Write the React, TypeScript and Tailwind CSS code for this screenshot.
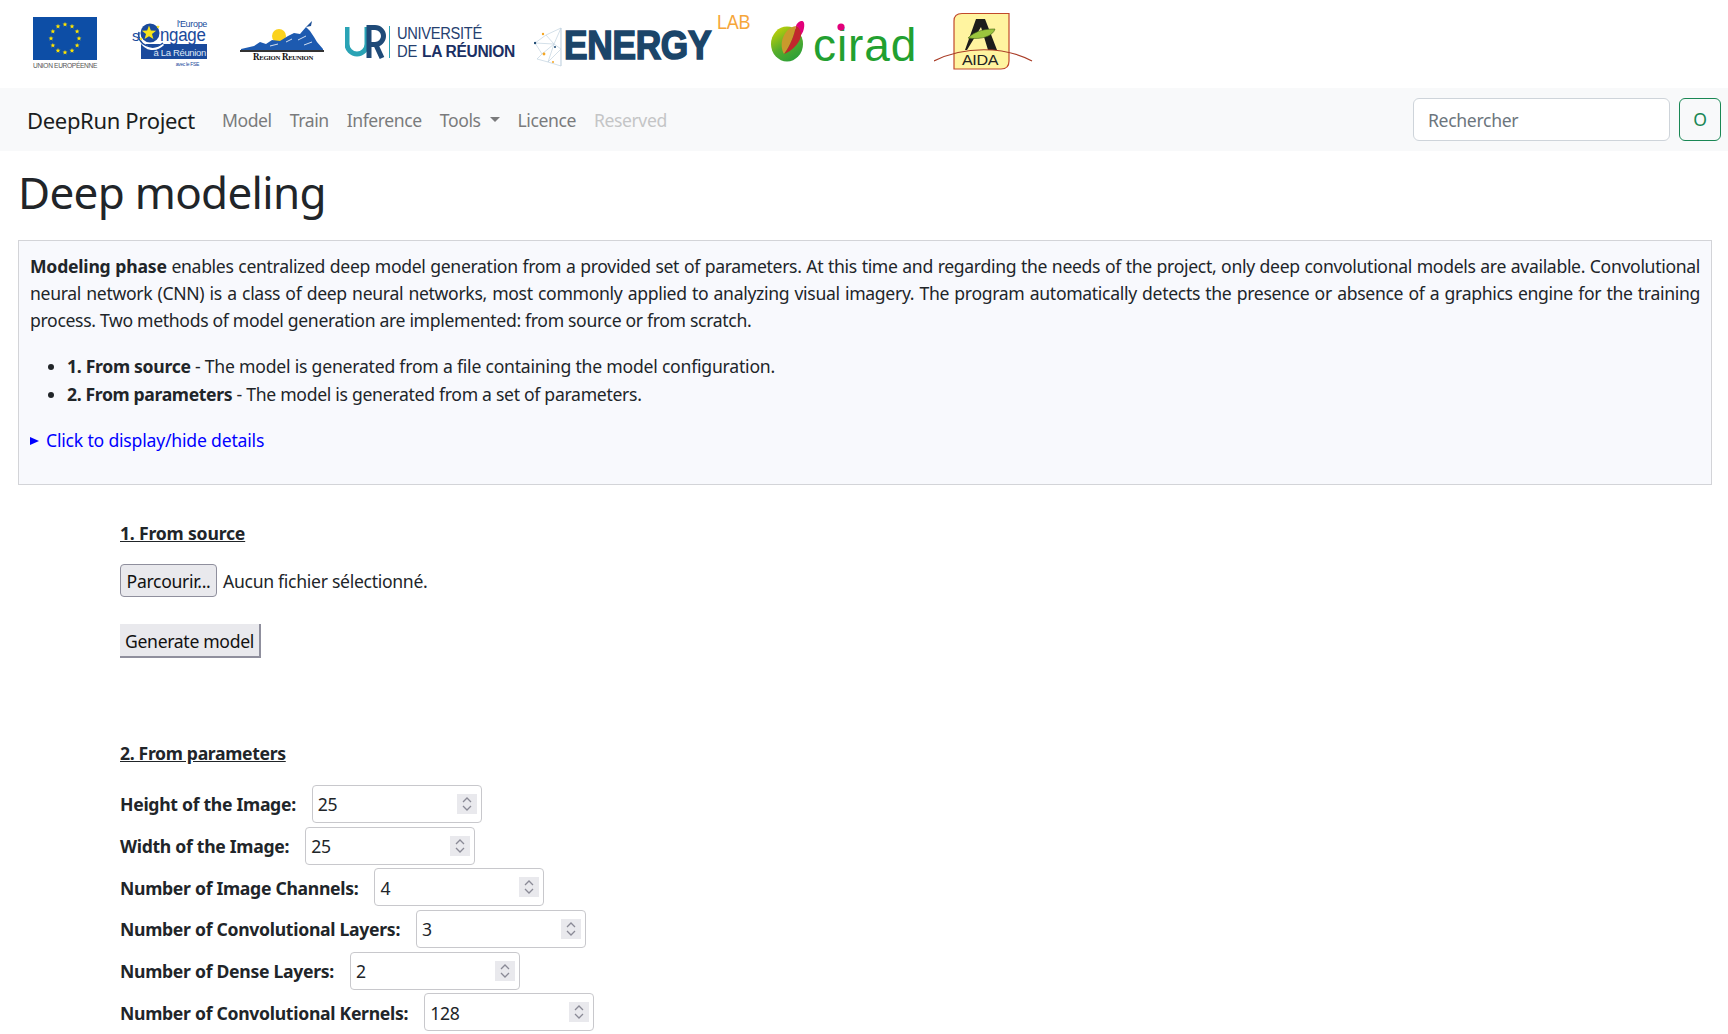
import React from 'react';

const sans = "font-['Noto_Sans',sans-serif]";

// EU stars placed on a circle
const starPoints = (cx: number, cy: number, r: number) => {
  const pts: string[] = [];
  for (let i = 0; i < 10; i++) {
    const a = (Math.PI / 5) * i - Math.PI / 2;
    const rad = i % 2 === 0 ? r : r * 0.42;
    pts.push(`${(cx + rad * Math.cos(a)).toFixed(2)},${(cy + rad * Math.sin(a)).toFixed(2)}`);
  }
  return pts.join(' ');
};

const EuLogo = () => (
  <svg width="66" height="88" viewBox="0 0 66 88">
    <rect x="1" y="17" width="64" height="43" fill="#0d4ea6" />
    {Array.from({ length: 12 }).map((_, i) => {
      const a = (Math.PI / 6) * i;
      return <polygon key={i} points={starPoints(33 + 14 * Math.cos(a), 38.5 + 14 * Math.sin(a), 2.6)} fill="#ffe500" />;
    })}
    <text x="1" y="68" fontSize="6.4" fill="#555" textLength="64" lengthAdjust="spacingAndGlyphs" fontFamily="Liberation Sans">UNION EUROPÉENNE</text>
  </svg>
);

const EuropeLogo = () => (
  <svg width="76" height="88" viewBox="0 0 76 88">
    <rect x="9" y="44" width="66" height="15" fill="#1a4a9c" />
    <path d="M9 41 C14 50 24 51 31 44" fill="none" stroke="#fff" strokeWidth="3" />
    <path d="M7 32 C4 44 20 52 31 43" fill="none" stroke="#1a4a9c" strokeWidth="1.6" />
    <text x="75" y="27" fontSize="9" fill="#1a4a9c" textAnchor="end" fontFamily="Liberation Sans">l'Europe</text>
    <text x="0" y="41" fontSize="15" fill="#1a4a9c" fontFamily="Liberation Sans">s</text>
    <text transform="translate(28 41) scale(0.89 1)" fontSize="19" fill="#1a4a9c" fontFamily="Liberation Sans">ngage</text>
    <circle cx="18" cy="33" r="9.5" fill="#1a4a9c" />
    <polygon points={starPoints(17, 33, 7.5)} fill="#f6e319" />
    <polygon points={starPoints(9, 39, 2)} fill="#f6e319" />
    <polygon points={starPoints(26, 27, 2)} fill="#f6e319" />
    <text x="74" y="56" fontSize="9.5" fill="#dfe7f6" textAnchor="end" fontFamily="Liberation Sans">à La Réunion</text>
    <text x="67" y="66" fontSize="5" fill="#1a4a9c" textAnchor="end" fontFamily="Liberation Sans">avec le FSE</text>
  </svg>
);

const RegionLogo = () => (
  <svg width="84" height="88" viewBox="0 0 84 88">
    <circle cx="39" cy="36" r="7" fill="#fbd21e" />
    <path d="M1 49 L14 46 L20 42 L26 44 L32 40 L40 41 L48 36 L54 33 L60 34 L66 27 L70 31 L74 37 L77 42 L83 49 L83 50 L1 50 Z" fill="#1d5ab0" />
    <path d="M66 27 L70 23 L72 21 L71 26 Z" fill="#1d4f96" />
    <path d="M30 46 L38 44 M46 42 L52 39 M58 40 L66 36 M64 45 L72 42" stroke="#fff" strokeWidth="0.8" />
    <rect x="0" y="50" width="84" height="2" fill="#333" />
    <text x="13" y="60" fontSize="9.5" fontWeight="700" fill="#111" textLength="60" lengthAdjust="spacingAndGlyphs" fontVariant="small-caps" fontFamily="Liberation Serif">Region Reunion</text>
  </svg>
);

const UrLogo = () => (
  <svg width="172" height="88" viewBox="0 0 172 88">
    <path d="M2 27 V44 a10 10 0 0 0 20 0 V27" fill="none" stroke="#2aa3b5" strokeWidth="5" />
    <path d="M24 58 V27.5 h6 a8 8 0 0 1 0 17 h-5 M31 45 L37 58" fill="none" stroke="#1f4a78" strokeWidth="5" />
    <rect x="44" y="26" width="1" height="32" fill="#2aa3b5" />
    <text x="52" y="38.5" fontSize="16" fill="#25406f" textLength="85" lengthAdjust="spacingAndGlyphs" fontFamily="Liberation Sans">UNIVERSITÉ</text>
    <text x="52" y="57" fontSize="16" fill="#25406f" textLength="20" lengthAdjust="spacingAndGlyphs" fontFamily="Liberation Sans">DE</text>
    <text x="77" y="57" fontSize="16" fontWeight="700" fill="#1b2f63" textLength="93" lengthAdjust="spacingAndGlyphs" fontFamily="Liberation Sans">LA RÉUNION</text>
  </svg>
);

const EnergyLogo = () => (
  <svg width="218" height="88" viewBox="0 0 218 88">
    <g stroke="#c2d2df" strokeWidth="0.7" fill="none">
      <path d="M27 28 L12 35 L1 43 L8 54 L3 59 L14 62 L27 66 Z" />
      <path d="M12 35 L20 44 L8 54 M20 44 L27 28 M20 44 L27 49 M20 44 L14 62 M27 49 L14 62 M1 43 L20 44" />
      <path d="M27 28 V66" />
    </g>
    <circle cx="1" cy="43" r="1.2" fill="#1d4a73" />
    <circle cx="9" cy="34" r="1.2" fill="#f5a623" />
    <circle cx="10" cy="54" r="1.4" fill="#f5a623" />
    <circle cx="21" cy="47" r="1" fill="#1d4a73" />
    <circle cx="19" cy="62" r="1" fill="#f5a623" />
    <text transform="translate(30 59) scale(0.882 1)" fontSize="40" fontWeight="700" fill="#1b4569" stroke="#1b4569" strokeWidth="1.6" fontFamily="Liberation Sans">ENERGY</text>
    <text transform="translate(183 29) scale(0.9 1)" fontSize="20" fill="#f6a63a" fontFamily="Liberation Sans">LAB</text>
  </svg>
);

const CiradLogo = () => (
  <svg width="150" height="88" viewBox="0 0 150 88">
    <defs>
      <linearGradient id="ciradGreen" x1="0" y1="0" x2="0.6" y2="1">
        <stop offset="0" stopColor="#d8d800" />
        <stop offset="0.6" stopColor="#56ad2c" />
        <stop offset="1" stopColor="#2fa037" />
      </linearGradient>
    </defs>
    <ellipse cx="17" cy="44" rx="16" ry="17.5" fill="url(#ciradGreen)" />
    <path d="M14 54 C8 44 14 28 26 26 C24 36 20 46 14 54 Z" fill="#c99a2c" />
    <path d="M14 54 C24 50 33 40 31 30 C30 28 28 26 26 26 C24 36 20 46 14 54 Z" fill="#c1272d" />
    <path d="M26 26 C27 22 33 19 34 23 C35 27 33 33 31 35 C31 31 29 27 26 26 Z" fill="#e2007a" />
    <text x="43" y="61" fontSize="46" fill="#22a030" textLength="103" fontFamily="Liberation Sans">cirad</text>
    <circle cx="71" cy="27" r="3.6" fill="#e2007a" />
  </svg>
);

const AidaLogo = () => (
  <svg width="100" height="88" viewBox="0 0 100 88">
    <path d="M28 13.5 H75 V61 Q75 69 67 69 H20 V21 Q20 13.5 28 13.5 Z" fill="#fff4a0" stroke="#c0492b" strokeWidth="1.2" />
    <path d="M31 50 L42 19 H51 L63 50 H54 L47 27 L33 50 Z" fill="#1d1d1b" />
    <path d="M34 38 C42 30 52 29 61 29 C59 36 48 40 34 38 Z" fill="#9bc53d" stroke="#3f5e16" strokeWidth="0.6" />
    <path d="M0 61 C30 46 70 46 98 61" fill="none" stroke="#a93c26" strokeWidth="1.2" />
    <text x="28" y="65" fontSize="14" fill="#222" textLength="36" lengthAdjust="spacingAndGlyphs" fontFamily="Liberation Sans">AIDA</text>
  </svg>
);

const Spinner = () => (
  <span className="flex h-[20px] w-[20px] flex-col items-center justify-center bg-[#e9e9ed]">
    <svg width="10" height="16" viewBox="0 0 10 16" fill="none" stroke="#8a8a96" strokeWidth="1.3">
      <path d="M1 6 L5 2 L9 6" />
      <path d="M1 10 L5 14 L9 10" />
    </svg>
  </span>
);

const params = [
  { label: 'Height of the Image:', value: '25' },
  { label: 'Width of the Image:', value: '25' },
  { label: 'Number of Image Channels:', value: '4' },
  { label: 'Number of Convolutional Layers:', value: '3' },
  { label: 'Number of Dense Layers:', value: '2' },
  { label: 'Number of Convolutional Kernels:', value: '128' },
];

const navLinks = ['Model', 'Train', 'Inference'];

const App: React.FC = () => {
  return (
    <div className={`${sans} h-[1034px] overflow-hidden bg-white text-[17.6px] tracking-[-0.33px] text-[#212529]`}>
      <header className="flex h-[88px] bg-white pl-[32px]">
        <EuLogo />
        <div className="ml-[34px]"><EuropeLogo /></div>
        <div className="ml-[32px]"><RegionLogo /></div>
        <div className="ml-[21px]"><UrLogo /></div>
        <div className="ml-[17px]"><EnergyLogo /></div>
        <div className="ml-[18px]"><CiradLogo /></div>
        <div className="ml-[14px]"><AidaLogo /></div>
      </header>

      <nav className="flex h-[63px] items-center bg-[#f8f9fa] pl-[27px] pr-[7px]">
        <a className="pt-[1px] text-[22px] text-[#1a1d20]">DeepRun Project</a>
        <ul className="ml-[27px] flex items-center gap-[18px] pt-[1px] tracking-[-0.42px] text-[#7a7b7c]">
          {navLinks.map((l) => (
            <li key={l}>{l}</li>
          ))}
          <li className="flex items-center">
            Tools
            <span className="ml-[9px] h-0 w-0 border-x-[5px] border-t-[5px] border-x-transparent border-t-[#7a7b7c]" />
          </li>
          <li>Licence</li>
          <li className="text-[#c4c5c6]">Reserved</li>
        </ul>
        <div className="ml-auto flex items-center gap-[9px]">
          <input
            readOnly
            placeholder="Rechercher"
            className="h-[43px] w-[257px] rounded-[6px] border border-[#ced4da] bg-white px-[14px] outline-none placeholder:text-[#6c757d]"
          />
          <button className="h-[43px] w-[42px] rounded-[6px] border border-[#198754] text-[#198754]">O</button>
        </div>
      </nav>

      <main className="pl-[18px] pr-[16px]">
        <h1 className="pt-[15px] text-[44px] font-normal leading-[53px] tracking-[-0.7px] text-[#212529]">Deep modeling</h1>

        <section className="mt-[21px] h-[245px] border border-[#d3d4d8] bg-[#f8f9fd] px-[11px] pt-[12px] leading-[27px]">
          <p className="text-justify">
            <strong className="font-bold tracking-[-0.22px]">Modeling phase</strong> enables centralized deep model generation from a provided set of parameters. At this time and regarding the needs of the project, only deep convolutional models are available. Convolutional neural network (CNN) is a class of deep neural networks, most commonly applied to analyzing visual imagery. The program automatically detects the presence or absence of a graphics engine for the training process. Two methods of model generation are implemented: from source or from scratch.
          </p>
          <ul className="mt-[19px] list-disc pl-[37px] leading-[27.5px] tracking-[-0.22px]">
            <li><strong className="font-bold tracking-[-0.3px]">1. From source</strong> - The model is generated from a file containing the model configuration.</li>
            <li><strong className="font-bold tracking-[-0.36px]">2. From parameters</strong> <span className="tracking-[-0.3px]">- The model is generated from a set of parameters.</span></li>
          </ul>
          <div className="mt-[19px] flex items-center tracking-[-0.2px] text-[#0000ff]">
            <span className="mr-[7px] h-0 w-0 border-y-[4.5px] border-l-[9px] border-y-transparent border-l-[#0000ff]" />
            Click to display/hide details
          </div>
        </section>

        <div className="pl-[102px]">
          <h2 className="mt-[35px] font-bold leading-[26px] tracking-[-0.19px] underline">1. From source</h2>
          <div className="mt-[18px] flex items-center">
            <button className="h-[33px] w-[97px] rounded-[4px] border border-[#8f8f9d] bg-[#e9e9ed] pt-[1px] text-[#111]">Parcourir...</button>
            <span className="ml-[6px] pt-[1px] tracking-[-0.3px]">Aucun fichier sélectionné.</span>
          </div>
          <button className="mt-[27px] h-[34px] w-[141px] border-r-2 border-b-2 border-[#8f8f9d] bg-[#e9e9ed] pt-[3px] text-[#111]">Generate model</button>

          <h2 className="mt-[82px] font-bold leading-[26px] underline">2. From parameters</h2>
          <div className="mt-[19px] flex flex-col gap-[3.7px]">
            {params.map((p) => (
              <label key={p.label} className="flex h-[38px] items-center font-bold tracking-[-0.29px]">
                <span className="pt-[1px]">{p.label}</span>
                <span className="ml-[16px] flex h-[38px] w-[170px] items-center rounded-[4px] border border-[#c8c8cc] pl-[5px] pr-[4px] font-normal">
                  <input readOnly value={p.value} className="min-w-0 flex-1 bg-transparent pt-[1px] outline-none" />
                  <Spinner />
                </span>
              </label>
            ))}
          </div>
        </div>
      </main>
    </div>
  );
};

export default App;
